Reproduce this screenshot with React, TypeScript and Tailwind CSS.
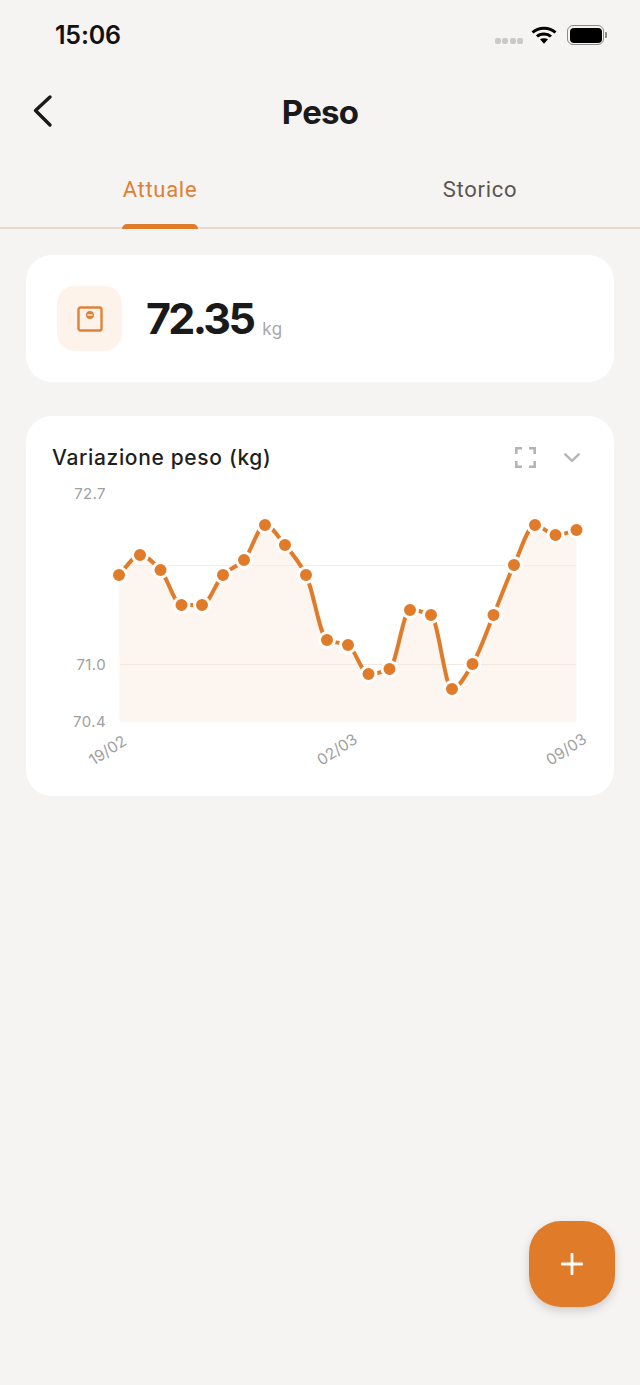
import React from "react";

const xs = [119, 140, 160.5, 181.5, 202, 223, 244, 265, 285, 306, 327, 348, 368.5, 389.5, 410, 431, 452, 472.5, 493.5, 514, 535, 555.5, 576.5];
const ys = [575, 555, 570, 605, 605, 575, 560, 525, 545, 575, 640, 645, 674, 669, 610, 615, 689, 664, 615, 565, 525, 535, 530];
const OX = 26;
const OY = 416;

function linePath(): string {
  const n = xs.length;
  const d: number[] = [];
  const s: number[] = [];
  for (let i = 0; i < n - 1; i++) s.push((ys[i + 1] - ys[i]) / (xs[i + 1] - xs[i]));
  for (let i = 0; i < n; i++) {
    if (i === 0) d.push(s[0]);
    else if (i === n - 1) d.push(s[n - 2]);
    else if (s[i - 1] * s[i] <= 0) d.push(0);
    else d.push((2 * s[i - 1] * s[i]) / (s[i - 1] + s[i]));
  }
  let p = `M${xs[0] - OX} ${ys[0] - OY}`;
  for (let i = 0; i < n - 1; i++) {
    const h = (xs[i + 1] - xs[i]) / 3;
    p += ` C${xs[i] - OX + h} ${ys[i] - OY + d[i] * h} ${xs[i + 1] - OX - h} ${ys[i + 1] - OY - d[i + 1] * h} ${xs[i + 1] - OX} ${ys[i + 1] - OY}`;
  }
  return p;
}

function Chart() {
  const line = linePath();
  const area = `${line} L${576.5 - OX} ${722 - OY} L${119.5 - OX} ${722 - OY} Z`;
  const labelCls = "fill-[#a0a0a0]";
  return (
    <svg width="588" height="380" viewBox="0 0 588 380" className="block" style={{ fontFamily: "Inter, sans-serif" }}>
      <path d={area} fill="#fdf5ef" />
      <line x1="94" x2="550" y1="149.500" y2="149.500" stroke="#f1ece8" strokeWidth="1" />
      <line x1="94" x2="550" y1="248.500" y2="248.500" stroke="#f3e7de" strokeWidth="1" />
      <path d={line} fill="none" stroke="#e07b2a" strokeWidth="4" strokeLinejoin="round" />
      {xs.map((x, i) => (
        <circle key={i} cx={x - OX} cy={ys[i] - OY} r="7.500" fill="#e07b2a" stroke="#ffffff" strokeWidth="3" />
      ))}
      <text x="80" y="83" textAnchor="end" fontSize="15" letterSpacing="0.400" className={labelCls}>72.7</text>
      <text x="80" y="254" textAnchor="end" fontSize="15" letterSpacing="0.400" className={labelCls}>71.0</text>
      <text x="80" y="311" textAnchor="end" fontSize="15" letterSpacing="0.400" className={labelCls}>70.4</text>
      <text transform="translate(67.500 350) rotate(-33)" fontSize="15.500" className={labelCls}>19/02</text>
      <text transform="translate(295.500 350) rotate(-33)" fontSize="15.500" className={labelCls}>02/03</text>
      <text transform="translate(524.500 350) rotate(-33)" fontSize="15.500" className={labelCls}>09/03</text>
    </svg>
  );
}

export default function App() {
  return (
    <div className="relative h-[1385px] w-[640px] overflow-hidden bg-[#f5f4f2]" style={{ fontFamily: "Inter, 'Liberation Sans', sans-serif" }}>
      {/* status bar */}
      <div className="flex h-[70px] items-center justify-between pl-[55px] pr-[33px]">
        <span className="text-[25px] font-semibold leading-none tracking-[-0.2px] text-[#111111]">15:06</span>
        <div className="flex items-center">
          <div className="mr-[8px] mt-[12px] flex gap-[1.500px]">
            <span className="h-[6px] w-[6px] rounded-[2px] bg-[#c9c9c9]" />
            <span className="h-[6px] w-[6px] rounded-[2px] bg-[#c9c9c9]" />
            <span className="h-[6px] w-[6px] rounded-[2px] bg-[#c9c9c9]" />
            <span className="h-[6px] w-[6px] rounded-[2px] bg-[#c9c9c9]" />
          </div>
          <svg width="26" height="20" viewBox="0 0 26 20" className="mr-[10px]">
            <path d="M1.500 7.500C7.500 1.700 18.500 1.700 24.500 7.500" fill="none" stroke="#000" strokeWidth="3" />
            <path d="M6 11.500C9.500 8.300 16.500 8.300 20 11.500" fill="none" stroke="#000" strokeWidth="3" />
            <path d="M9 14.300C11.200 12.900 14.800 12.900 17 14.300L13 18.800Z" fill="#000" />
          </svg>
          <div className="flex items-center">
            <div className="flex h-[20px] w-[37px] items-center justify-center rounded-[6px] border border-[#8a8a8a]">
              <div className="h-[15px] w-[32px] rounded-[4px] bg-black" />
            </div>
            <div className="ml-[1px] h-[6px] w-[2px] rounded-r-[1px] bg-[#8a8a8a]" />
          </div>
        </div>
      </div>

      {/* header */}
      <div className="relative flex h-[84px] items-center justify-center">
        <svg width="24" height="34" viewBox="0 0 24 34" className="absolute left-[31px] top-[24px]">
          <path d="M19 3L4.500 16.500L19 31" fill="none" stroke="#1a1a1a" strokeWidth="3.400" strokeLinecap="round" strokeLinejoin="round" />
        </svg>
        <span className="mt-[1px] text-[33px] font-bold tracking-[-0.8px] text-[#1a1a1a]">Peso</span>
      </div>

      {/* tabs */}
      <div className="flex h-[75px] border-b-2 border-[#e6d9cd]">
        <div className="relative flex w-1/2 justify-center pt-[21px]">
          <span className="text-[22px] font-normal leading-[30px] tracking-[0.7px] text-[#e07f34]" style={{ fontFamily: "Roboto, sans-serif" }}>Attuale</span>
          <span className="absolute bottom-[-2px] left-[122px] h-[5px] w-[76px] rounded-t-[5px] bg-[#e07b2a]" />
        </div>
        <div className="flex w-1/2 justify-center pt-[21px]">
          <span className="text-[22px] font-normal leading-[30px] tracking-[0.7px] text-[#5b5552]" style={{ fontFamily: "Roboto, sans-serif" }}>Storico</span>
        </div>
      </div>

      {/* main content */}
      <div className="px-[26px] pt-[26px]">
        <div className="flex h-[127px] items-center rounded-[26px] bg-white pl-[31px]">
          <div className="flex h-[65px] w-[65px] items-center justify-center rounded-[18px] bg-[#fdf3eb]">
            <svg width="26" height="26" viewBox="0 0 26 26">
              <rect x="1.500" y="1.500" width="23" height="23" rx="2" fill="none" stroke="#e08236" strokeWidth="2.400" />
              <circle cx="13" cy="9" r="4" fill="#e08236" />
              <rect x="10.500" y="8.300" width="5" height="1.400" fill="#fdf3eb" />
            </svg>
          </div>
          <span className="ml-[24px] text-[43px] font-bold leading-none tracking-[-2.700px] text-[#1a1a1a]">72.35</span>
          <span className="ml-[9px] mt-[21px] text-[17px] leading-none tracking-[0.5px] text-[#a8a8a8]">kg</span>
        </div>

        <div className="relative mt-[34px] h-[380px] rounded-[26px] bg-white">
          <div className="absolute left-0 right-0 top-0 flex h-[83px] items-start justify-between pl-[26px] pr-[34px] pt-[29px]">
            <span className="text-[21px] font-medium leading-[26px] tracking-[0.65px] text-[#1f1f1f]">Variazione peso (kg)</span>
            <div className="flex items-center gap-[28px] pt-[2px]">
              <svg width="21" height="21" viewBox="0 0 21 21" fill="none" stroke="#b4b4b8" strokeWidth="2.600">
                <path d="M1.300 7V1.300H7" />
                <path d="M14 1.300H19.700V7" />
                <path d="M1.300 14V19.700H7" />
                <path d="M14 19.700H19.700V14" />
              </svg>
              <svg width="16" height="10" viewBox="0 0 16 10" fill="none" stroke="#b4b4b8" strokeWidth="2.400" strokeLinecap="round" strokeLinejoin="round">
                <path d="M1.300 1.300L8 8L14.700 1.300" />
              </svg>
            </div>
          </div>
          <Chart />
        </div>
      </div>

      {/* fab */}
      <button className="absolute left-[529px] top-[1221px] flex h-[86px] w-[86px] items-center justify-center rounded-[32px] bg-[#e07b2a] shadow-[0_4px_10px_rgba(0,0,0,0.16)]">
        <svg width="22" height="22" viewBox="0 0 22 22" stroke="#ffffff" strokeWidth="2.800" strokeLinecap="round">
          <path d="M11 1V21M1 11H21" />
        </svg>
      </button>
    </div>
  );
}
